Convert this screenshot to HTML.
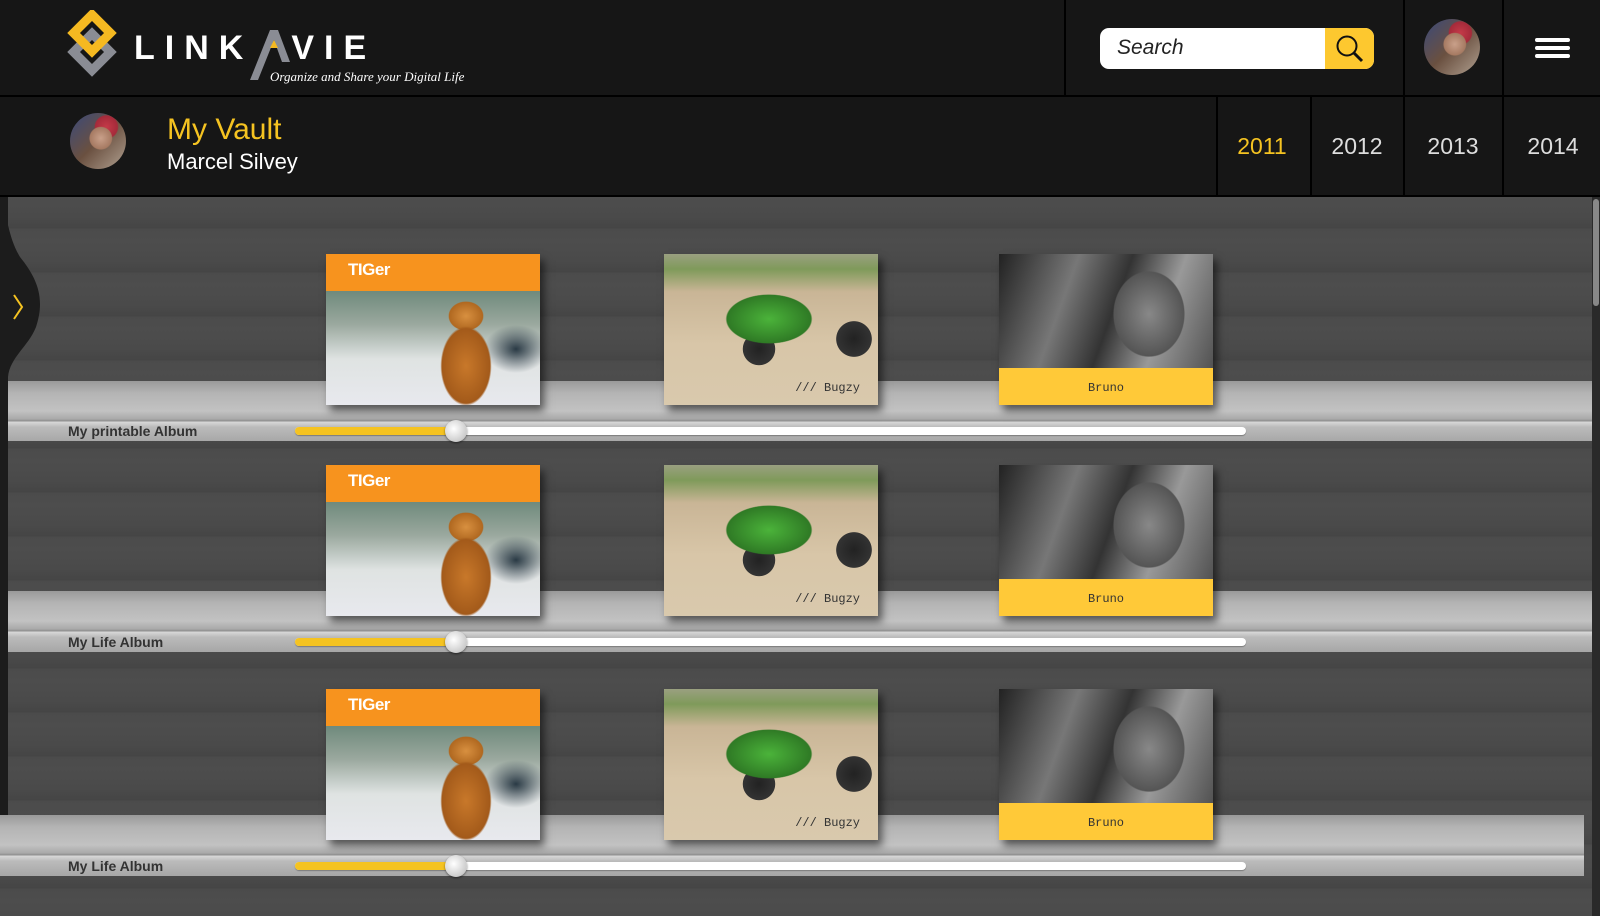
<!DOCTYPE html>
<html><head><meta charset="utf-8"><style>
*{margin:0;padding:0;box-sizing:border-box}
body{width:1600px;height:916px;overflow:hidden;background:#161616;font-family:"Liberation Sans",sans-serif;position:relative}
.abs{position:absolute}
.hdr{left:0;top:0;width:1600px;height:95px;background:#161616}
.bar{left:0;top:97px;width:1600px;height:99px;background:#161616}
.sep{background:#000}
.content{left:0;top:197px;width:1600px;height:719px;background:
repeating-linear-gradient(180deg,#4d4d4d 0,#4a4a4a 20px,#454545 31px,#4b4b4b 32px,#4d4d4d 44px)}
.shelf{left:8px;width:1584px;background:linear-gradient(180deg,#9a9a9a 0,#b4b4b4 12px,#c2c2c2 30px,#a9a9a9 38px,#8f8f8f 40px,#d8d8d8 41px,#bbb 46px,#a8a8a8 60px)}
.album{width:214px;height:151px;box-shadow:4px 6px 8px rgba(0,0,0,.55)}
.tiger{background:linear-gradient(180deg,#f7931e 0,#f7931e 37px,transparent 37px),
radial-gradient(ellipse 40px 62px at 140px 112px,#c8782a 0,#a35a1a 60%,transparent 64%),
radial-gradient(ellipse 24px 20px at 140px 62px,#d89040 0,#b06820 70%,transparent 74%),
radial-gradient(ellipse 40px 30px at 190px 95px,#2a3a45 0,transparent 80%),
linear-gradient(180deg,#6f8a7c 37px,#9aa89e 70px,#dfe3e2 105px,#e8e9ee 151px)}
.tiger b{position:absolute;left:22px;top:6px;color:#fff;font-size:17px;font-weight:bold;letter-spacing:-.5px}
.car{background:radial-gradient(ellipse 70px 40px at 105px 65px,#4bb33a 0,#2f7a25 60%,transparent 62%),
radial-gradient(circle 20px at 95px 95px,#222 0,#333 80%,transparent 82%),
radial-gradient(circle 22px at 190px 85px,#222 0,#333 80%,transparent 82%),
linear-gradient(180deg,#9aa080 0,#7f9a5a 10%,#c9b596 25%,#d8c6a8 60%,#d9c9ad 100%)}
.car span{position:absolute;right:18px;bottom:10px;font-family:"Liberation Mono",monospace;font-size:12px;color:#333}
.bab{background:linear-gradient(180deg,transparent 114px,#ffc938 114px),
radial-gradient(ellipse 50px 60px at 150px 60px,#888 0,#555 70%,transparent 72%),
linear-gradient(110deg,#222 0,#777 30%,#333 50%,#999 70%,#444 100%)}
.bab span{position:absolute;left:0;right:0;bottom:10px;text-align:center;font-family:"Liberation Mono",monospace;font-size:12px;color:#333}
.lbl{left:68px;font-weight:bold;font-size:14px;color:#333}
.trk{left:295px;width:951px;height:8px;border-radius:4px;background:#fff;box-shadow:0 1px 1px rgba(0,0,0,.3)}
.trk i{position:absolute;left:0;top:0;height:8px;width:161px;border-radius:4px;background:#f5c321}
.knob{width:22px;height:22px;border-radius:50%;background:radial-gradient(circle at 40% 40%,#fff,#ccc 70%,#aaa);box-shadow:0 1px 2px rgba(0,0,0,.5)}
.yr{top:97px;height:99px;width:90px;text-align:center;line-height:99px;font-size:23px;color:#ddd}
.av{border-radius:50%;background:radial-gradient(circle at 55% 45%,#c9a08a 0,#a67a62 25%,transparent 27%),radial-gradient(circle at 65% 25%,#c43a48 0,#a52a3a 20%,transparent 22%),linear-gradient(135deg,#3a4a7a,#6a5040 50%,#b0a090)}
</style></head><body>
<div class="abs hdr"></div>
<div class="abs sep" style="left:0;top:95px;width:1600px;height:2px"></div>
<div class="abs bar"></div>
<div class="abs sep" style="left:1064px;top:0;width:2px;height:95px"></div>
<div class="abs sep" style="left:1403px;top:0;width:2px;height:196px"></div>
<div class="abs sep" style="left:1502px;top:0;width:2px;height:196px"></div>
<div class="abs sep" style="left:1216px;top:97px;width:2px;height:99px"></div>
<div class="abs sep" style="left:1310px;top:97px;width:2px;height:99px"></div>
<div class="abs sep" style="left:0;top:195px;width:1600px;height:2px"></div>

<svg class="abs" style="left:66px;top:10px" width="52" height="74" viewBox="0 0 52 74">
<rect x="13" y="29" width="26" height="26" transform="rotate(45 26 42)" fill="none" stroke="#8a8c94" stroke-width="9"/>
<rect x="13" y="10" width="26" height="26" transform="rotate(45 26 23)" fill="none" stroke="#f5b921" stroke-width="9"/>
</svg>
<div class="abs" style="left:134px;top:29px;color:#fff;font-size:34px;font-weight:bold;letter-spacing:10px">LINK<span style="display:inline-block;width:38px"></span>VIE</div>
<svg class="abs" style="left:248px;top:28px" width="52" height="54" viewBox="0 0 52 54"><path d="M2 52 L22 2 L30 2 L42 34 L34 34 L26 12 L10 52Z" fill="#8a8c94"/><path d="M22 20 L26 12 L30 20Z" fill="#f5b921"/></svg>
<div class="abs" style="left:270px;top:69px;color:#fff;font-size:13px;font-style:italic;font-family:'Liberation Serif',serif">Organize and Share your Digital Life</div>

<div class="abs" style="left:1100px;top:28px;width:274px;height:41px;border-radius:9px;background:#fff;overflow:hidden">
<span style="position:absolute;left:17px;top:8px;font-size:21px;font-style:italic;color:#222">Search</span>
<div style="position:absolute;left:225px;top:0;width:49px;height:41px;background:#fdc82f"></div>
<svg style="position:absolute;left:234px;top:5px" width="32" height="32" viewBox="0 0 32 32"><circle cx="13" cy="13" r="9.5" fill="none" stroke="#111" stroke-width="2"/><line x1="20" y1="20" x2="28" y2="28" stroke="#111" stroke-width="3"/></svg>
</div>
<div class="abs av" style="left:1424px;top:19px;width:56px;height:56px"></div>
<div class="abs" style="left:1535px;top:38px;width:35px;height:4px;background:#fff;border-radius:2px"></div>
<div class="abs" style="left:1535px;top:46px;width:35px;height:4px;background:#fff;border-radius:2px"></div>
<div class="abs" style="left:1535px;top:54px;width:35px;height:4px;background:#fff;border-radius:2px"></div>

<div class="abs av" style="left:70px;top:113px;width:56px;height:56px"></div>
<div class="abs" style="left:167px;top:113px;color:#f5c321;font-size:30px">My Vault</div>
<div class="abs" style="left:167px;top:149px;color:#fff;font-size:22px">Marcel Silvey</div>
<div class="abs yr" style="left:1217px;color:#f5c321">2011</div>
<div class="abs yr" style="left:1312px">2012</div>
<div class="abs yr" style="left:1408px">2013</div>
<div class="abs yr" style="left:1508px">2014</div>

<div class="abs content"></div>
<div class="abs" style="left:0;top:197px;width:8px;height:640px;background:#1c1c1c"></div>
<svg class="abs" style="left:0;top:197px" width="44" height="180" viewBox="0 0 44 180"><path d="M0 0 C8 20 8 40 20 60 C36 80 46 100 36 130 C28 150 10 160 8 180 L0 180Z" fill="#1c1c1c"/><path d="M14 98 L22 110 L14 122" fill="none" stroke="#f5c321" stroke-width="2"/></svg>
<div class="abs" style="left:1592px;top:197px;width:8px;height:719px;background:#2a2a2a"></div>
<div class="abs" style="left:1593px;top:199px;width:6px;height:107px;background:#888;border-radius:3px"></div>

<div class="abs shelf" style="top:381px;height:60px"></div>
<div class="abs shelf" style="top:591px;height:61px"></div>
<div class="abs shelf" style="top:815px;height:61px;left:0"></div>

<div class="abs album tiger" style="left:326px;top:254px"><b>TIGer</b></div>
<div class="abs album car" style="left:664px;top:254px"><span>/// Bugzy</span></div>
<div class="abs album bab" style="left:999px;top:254px"><span>Bruno</span></div>
<div class="abs album tiger" style="left:326px;top:465px"><b>TIGer</b></div>
<div class="abs album car" style="left:664px;top:465px"><span>/// Bugzy</span></div>
<div class="abs album bab" style="left:999px;top:465px"><span>Bruno</span></div>
<div class="abs album tiger" style="left:326px;top:689px"><b>TIGer</b></div>
<div class="abs album car" style="left:664px;top:689px"><span>/// Bugzy</span></div>
<div class="abs album bab" style="left:999px;top:689px"><span>Bruno</span></div>

<div class="abs lbl" style="top:423px">My printable Album</div>
<div class="abs trk" style="top:427px"><i></i></div>
<div class="abs knob" style="left:445px;top:420px"></div>
<div class="abs lbl" style="top:634px">My Life Album</div>
<div class="abs trk" style="top:638px"><i></i></div>
<div class="abs knob" style="left:445px;top:631px"></div>
<div class="abs lbl" style="top:858px">My Life Album</div>
<div class="abs trk" style="top:862px"><i></i></div>
<div class="abs knob" style="left:445px;top:855px"></div>
</body></html>
